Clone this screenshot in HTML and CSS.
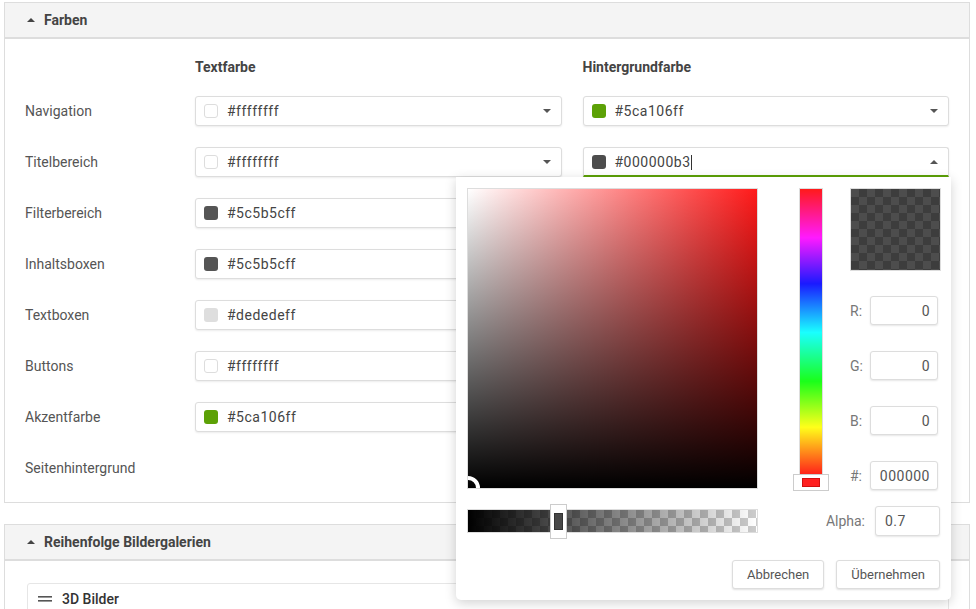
FILE: index.html
```html
<!DOCTYPE html>
<html lang="de">
<head>
  <meta charset="UTF-8">
  <meta name="viewport" content="width=device-width, initial-scale=1.0">
  <title>Farben</title>
  <link rel="stylesheet" href="styles.css">
</head>
<body>
  <!-- Farben -->
  <section class="panel">
    <div class="panel-head"><span class="caret-up"></span>Farben</div>
    <div class="panel-body color-grid">
      <div></div>
      <div class="col-title">Textfarbe</div>
      <div class="col-title">Hintergrundfarbe</div>

      <div class="row-label">Navigation</div>
      <div class="color-field"><span class="swatch sw-white"></span><span class="value">#ffffffff</span><span class="caret-down"></span></div>
      <div class="color-field"><span class="swatch sw-green"></span><span class="value">#5ca106ff</span><span class="caret-down"></span></div>

      <div class="row-label">Titelbereich</div>
      <div class="color-field"><span class="swatch sw-white"></span><span class="value">#ffffffff</span><span class="caret-down"></span></div>
      <div class="color-field active">
        <span class="swatch sw-dark"></span><span class="value">#000000b3</span><span class="text-cursor"></span><span class="caret-up"></span>

        <!-- Farbwähler -->
        <div class="picker">
          <div class="picker-main">
            <div class="sat-box"><span class="sat-cursor"></span></div>
            <div class="hue-bar"><span class="hue-handle"><i></i></span></div>
            <div class="picker-side">
              <div class="preview"></div>
              <label class="channel">R:<input type="text" value="0"></label>
              <label class="channel">G:<input type="text" value="0"></label>
              <label class="channel">B:<input type="text" value="0"></label>
              <label class="channel">#:<input type="text" value="000000"></label>
            </div>
          </div>
          <div class="picker-alpha">
            <div class="alpha-bar"><span class="alpha-handle"><i></i></span></div>
            <label class="alpha-field">Alpha:<input type="text" value="0.7"></label>
          </div>
          <div class="picker-actions">
            <button>Abbrechen</button>
            <button>Übernehmen</button>
          </div>
        </div>
      </div>

      <div class="row-label">Filterbereich</div>
      <div class="color-field"><span class="swatch sw-gray"></span><span class="value">#5c5b5cff</span><span class="caret-down"></span></div>
      <div class="color-field"><span class="swatch sw-light"></span><span class="value">#f4f4f4ff</span><span class="caret-down"></span></div>

      <div class="row-label">Inhaltsboxen</div>
      <div class="color-field"><span class="swatch sw-gray"></span><span class="value">#5c5b5cff</span><span class="caret-down"></span></div>
      <div class="color-field"><span class="swatch sw-white"></span><span class="value">#ffffffff</span><span class="caret-down"></span></div>

      <div class="row-label">Textboxen</div>
      <div class="color-field"><span class="swatch sw-light"></span><span class="value">#dededeff</span><span class="caret-down"></span></div>
      <div class="color-field"><span class="swatch sw-white"></span><span class="value">#ffffffff</span><span class="caret-down"></span></div>

      <div class="row-label">Buttons</div>
      <div class="color-field"><span class="swatch sw-white"></span><span class="value">#ffffffff</span><span class="caret-down"></span></div>
      <div class="color-field"><span class="swatch sw-green"></span><span class="value">#5ca106ff</span><span class="caret-down"></span></div>

      <div class="row-label">Akzentfarbe</div>
      <div class="color-field"><span class="swatch sw-green"></span><span class="value">#5ca106ff</span><span class="caret-down"></span></div>
      <div></div>

      <div class="row-label">Seitenhintergrund</div>
      <div></div>
      <div class="color-field"><span class="swatch sw-light"></span><span class="value">#f4f4f4ff</span><span class="caret-down"></span></div>
    </div>
  </section>

  <!-- Reihenfolge Bildergalerien -->
  <section class="panel">
    <div class="panel-head"><span class="caret-up"></span>Reihenfolge Bildergalerien</div>
    <div class="panel-body gallery-list">
      <div class="gallery-item">
        <svg class="drag" width="14" height="6" viewBox="0 0 14 6"><rect x="0" y="0" width="14" height="1.6" fill="#555"/><rect x="0" y="4" width="14" height="1.6" fill="#555"/></svg>
        3D Bilder
      </div>
    </div>
  </section>
</body>
</html>
```

FILE: styles.css
```css
body {
  margin: 0;
  padding: 2px 6px 0 4px;
  font-family: Roboto, "Liberation Sans", sans-serif;
  color: #555;
  background: #fff;
  overflow: hidden;
}

.panel {
  border: 1px solid #ddd;
  background: #fff;
}

.panel + .panel {
  margin-top: 21px;
}

.panel-head {
  display: flex;
  align-items: center;
  height: 34px;
  padding-left: 22px;
  background: #f4f4f4;
  border-bottom: 2px solid #ddd;
  font-size: 14px;
  font-weight: 700;
  color: #444;
}

.panel-head .caret-up {
  margin-right: 9px;
}

.caret-up {
  width: 0;
  height: 0;
  border-left: 4px solid transparent;
  border-right: 4px solid transparent;
  border-bottom: 4px solid #444;
}

.caret-down {
  width: 0;
  height: 0;
  border-left: 4.5px solid transparent;
  border-right: 4.5px solid transparent;
  border-top: 4.5px solid #555;
  margin-left: auto;
}

/* grille des couleurs */
.color-grid {
  display: grid;
  grid-template-columns: 149px 1fr 1fr;
  column-gap: 21px;
  row-gap: 21px;
  padding: 20px 20px 19px;
}

.col-title {
  font-size: 14px;
  font-weight: 700;
  color: #444;
  line-height: 16px;
}

.row-label {
  display: flex;
  align-items: center;
  height: 30px;
  font-size: 14px;
  color: #555;
}

.color-field {
  position: relative;
  display: flex;
  align-items: center;
  height: 30px;
  box-sizing: border-box;
  padding: 0 10px 0 8px;
  border: 1px solid #ddd;
  border-radius: 3px;
  box-shadow: 0 1px 2px rgba(0, 0, 0, 0.08);
  background: #fff;
}

.color-field .value {
  margin-left: 9px;
  font-size: 14px;
  letter-spacing: 0.5px;
  color: #444;
}

.color-field.active {
  border-bottom: 2px solid #5ca106;
  border-radius: 3px 3px 0 0;
  padding-top: 1px;
}

.color-field.active .caret-up {
  margin-left: auto;
  border-bottom-color: #555;
}

.text-cursor {
  width: 1px;
  height: 15px;
  background: #333;
}

.swatch {
  width: 14px;
  height: 14px;
  border-radius: 3px;
  box-sizing: border-box;
}

.sw-white { background: #fff; border: 1px solid #ddd; }
.sw-green { background: #5ca106; }
.sw-gray { background: #555; }
.sw-dark { background: #4d4d4d; }
.sw-light { background: #dedede; }

/* sélecteur de couleur */
.picker {
  position: absolute;
  top: calc(100% + 2px);
  right: -3px;
  z-index: 10;
  width: 495px;
  box-sizing: border-box;
  padding: 11px 10px 11px 11px;
  background: #fff;
  border-radius: 0 0 5px 5px;
  box-shadow: 0 3px 12px rgba(0, 0, 0, 0.18);
  cursor: default;
}

.picker-main {
  display: flex;
  align-items: flex-start;
  height: 303px;
}

.sat-box {
  position: relative;
  width: 291px;
  height: 301px;
  box-sizing: border-box;
  border: 1px solid #ddd;
  overflow: hidden;
  background: linear-gradient(to top, #000, rgba(0, 0, 0, 0)),
              linear-gradient(to right, #fff, #ff1a1a);
}

.sat-cursor {
  position: absolute;
  left: -12px;
  bottom: -12px;
  width: 24px;
  height: 24px;
  box-sizing: border-box;
  border: 4px solid #fff;
  border-radius: 50%;
}

.hue-bar {
  position: relative;
  margin-left: 41px;
  width: 24px;
  height: 289px;
  box-sizing: border-box;
  border: 1px solid #ddd;
  background: linear-gradient(to bottom, #ff1a1a 0%, #ff1aff 17%, #1a1aff 33%, #1affff 50%, #1aff1a 67%, #ffff1a 83%, #ff1a1a 100%);
}

.hue-handle {
  position: absolute;
  left: -7px;
  bottom: -15px;
  width: 36px;
  height: 17px;
  box-sizing: border-box;
  padding: 3px 8px;
  border: 1px solid #ccc;
  background: #fff;
}

.hue-handle i {
  display: block;
  height: 100%;
  box-sizing: border-box;
  background: #ff2020;
  border: 1px solid #d01010;
}

.picker-side {
  margin-left: 27px;
  width: 91px;
}

.preview {
  height: 83px;
  box-sizing: border-box;
  border: 1px solid #ddd;
  background-color: #4d4d4d;
  background-image: linear-gradient(45deg, #3d3d3d 25%, transparent 25%, transparent 75%, #3d3d3d 75%),
                    linear-gradient(45deg, #3d3d3d 25%, transparent 25%, transparent 75%, #3d3d3d 75%);
  background-size: 16px 16px;
  background-position: 0 0, 8px 8px;
  margin-bottom: 25px;
}

.channel {
  display: flex;
  align-items: center;
  justify-content: space-between;
  font-size: 14px;
  color: #777;
  margin-bottom: 26px;
}

.channel input,
.alpha-field input {
  width: 68px;
  height: 29px;
  box-sizing: border-box;
  margin: 0 3px 0 0;
  padding: 0 7px;
  border: 1px solid #ddd;
  border-radius: 3px;
  box-shadow: 0 1px 2px rgba(0, 0, 0, 0.1);
  font-family: Roboto, "Liberation Sans", sans-serif;
  font-size: 14px;
  letter-spacing: 0.5px;
  color: #555;
  text-align: right;
}

.picker-alpha {
  display: flex;
  align-items: center;
  height: 30px;
  margin-top: 15px;
}

.alpha-bar {
  position: relative;
  width: 291px;
  height: 24px;
  box-sizing: border-box;
  border: 1px solid #ddd;
  background-color: #fff;
  background-image: linear-gradient(to right, #000, rgba(0, 0, 0, 0)),
                    linear-gradient(45deg, #ccc 25%, transparent 25%, transparent 75%, #ccc 75%),
                    linear-gradient(45deg, #ccc 25%, transparent 25%, transparent 75%, #ccc 75%);
  background-size: 100% 100%, 16px 16px, 16px 16px;
  background-position: 0 0, 0 0, 8px 8px;
}

.alpha-handle {
  position: absolute;
  left: 82px;
  top: -6px;
  width: 17px;
  height: 35px;
  box-sizing: border-box;
  padding: 8px 3px;
  border: 1px solid #ccc;
  background: #fff;
}

.alpha-handle i {
  display: block;
  height: 100%;
  box-sizing: border-box;
  background: #474747;
  border: 1px solid #333;
}

.alpha-field {
  display: flex;
  align-items: center;
  gap: 10px;
  margin-left: auto;
  margin-right: 1px;
  font-size: 14px;
  color: #777;
}

.alpha-field input {
  width: 65px;
  height: 30px;
  margin: 0;
  padding: 0 9px;
  text-align: left;
}

.picker-actions {
  display: flex;
  justify-content: flex-end;
  gap: 12px;
  margin-top: 24px;
  padding-right: 1px;
}

.picker-actions button {
  height: 29px;
  padding: 0 14px;
  border: 1px solid #ddd;
  border-radius: 3px;
  background: #fff;
  box-shadow: 0 1px 2px rgba(0, 0, 0, 0.12);
  font-family: Roboto, "Liberation Sans", sans-serif;
  font-size: 13px;
  color: #555;
}

/* liste des galeries */
.gallery-list {
  padding: 22px 20px 20px 22px;
}

.gallery-item {
  display: flex;
  align-items: center;
  gap: 10px;
  height: 30px;
  padding-left: 10px;
  border: 1px solid #e6e6e6;
  border-radius: 3px;
  font-size: 14px;
  font-weight: 500;
  color: #333;
}
```
